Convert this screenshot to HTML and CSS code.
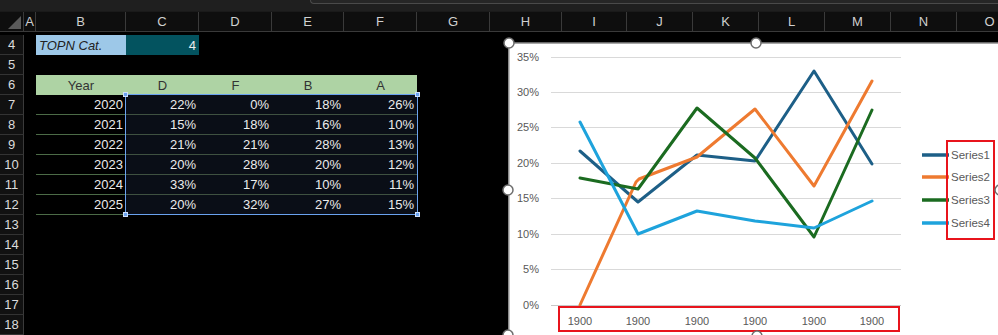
FILE: index.html
```html
<!DOCTYPE html>
<html lang="en">

<head>
    <meta charset="UTF-8">
    <meta name="viewport" content="width=device-width, initial-scale=1.0">
    <title>TOPN Chart</title>
    <link rel="stylesheet" href="styles.css">
</head>

<body>
    <div class="topbar">
        <div class="formula"></div>
    </div>

    <div class="sheet">
        <div class="row heads">
            <div class="corner"></div>
            <div>A</div><div>B</div><div>C</div><div>D</div><div>E</div><div>F</div><div>G</div>
            <div>H</div><div>I</div><div>J</div><div>K</div><div>L</div><div>M</div><div>N</div><div>O</div>
        </div>
        <div class="gap"></div>

        <div class="row">
            <div class="num">4</div><div></div>
            <div class="cell topn">TOPN Cat.</div>
            <div class="cell count">4</div>
        </div>
        <div class="row">
            <div class="num">5</div>
        </div>
        <div class="row">
            <div class="num">6</div><div></div>
            <div class="cell head">Year</div>
            <div class="cell head">D</div>
            <div class="cell head">F</div>
            <div class="cell head">B</div>
            <div class="cell head">A</div>
        </div>
        <div class="row">
            <div class="num">7</div><div></div>
            <div class="cell year">2020</div>
            <div class="cell val">22%</div><div class="cell val">0%</div><div class="cell val">18%</div><div class="cell val">26%</div>
        </div>
        <div class="row">
            <div class="num">8</div><div></div>
            <div class="cell year">2021</div>
            <div class="cell val">15%</div><div class="cell val">18%</div><div class="cell val">16%</div><div class="cell val">10%</div>
        </div>
        <div class="row">
            <div class="num">9</div><div></div>
            <div class="cell year">2022</div>
            <div class="cell val">21%</div><div class="cell val">21%</div><div class="cell val">28%</div><div class="cell val">13%</div>
        </div>
        <div class="row">
            <div class="num">10</div><div></div>
            <div class="cell year">2023</div>
            <div class="cell val">20%</div><div class="cell val">28%</div><div class="cell val">20%</div><div class="cell val">12%</div>
        </div>
        <div class="row">
            <div class="num">11</div><div></div>
            <div class="cell year">2024</div>
            <div class="cell val">33%</div><div class="cell val">17%</div><div class="cell val">10%</div><div class="cell val">11%</div>
        </div>
        <div class="row">
            <div class="num">12</div><div></div>
            <div class="cell year">2025</div>
            <div class="cell val">20%</div><div class="cell val">32%</div><div class="cell val">27%</div><div class="cell val">15%</div>
        </div>
        <div class="row"><div class="num">13</div></div>
        <div class="row"><div class="num">14</div></div>
        <div class="row"><div class="num">15</div></div>
        <div class="row"><div class="num">16</div></div>
        <div class="row"><div class="num">17</div></div>
        <div class="row"><div class="num">18</div></div>

        <!-- selection C7:F12 -->
        <div class="selection">
            <span class="knob tl"></span><span class="knob tr"></span>
            <span class="knob bl"></span><span class="knob br"></span>
        </div>
    </div>

    <!-- floating chart -->
    <svg class="chart" width="492" height="300" viewBox="0 0 492 300">
        <rect x="0.75" y="1" width="500" height="320" fill="#fff" stroke="#8a8a8a" stroke-width="1.5" />

        <g stroke="#d9d9d9" stroke-width="1">
            <line x1="43" y1="15.5" x2="393" y2="15.5" />
            <line x1="43" y1="50.5" x2="393" y2="50.5" />
            <line x1="43" y1="85.5" x2="393" y2="85.5" />
            <line x1="43" y1="121.5" x2="393" y2="121.5" />
            <line x1="43" y1="156.5" x2="393" y2="156.5" />
            <line x1="43" y1="192.5" x2="393" y2="192.5" />
            <line x1="43" y1="227.5" x2="393" y2="227.5" />
            <line x1="43" y1="263.5" x2="393" y2="263.5" stroke="#c8c8c8" />
        </g>

        <g class="axis" text-anchor="end">
            <text x="31" y="19">35%</text>
            <text x="31" y="54">30%</text>
            <text x="31" y="89">25%</text>
            <text x="31" y="125">20%</text>
            <text x="31" y="160">15%</text>
            <text x="31" y="196">10%</text>
            <text x="31" y="231">5%</text>
            <text x="31" y="267">0%</text>
        </g>

        <g class="axis" text-anchor="middle">
            <text x="72" y="283">1900</text>
            <text x="130" y="283">1900</text>
            <text x="189" y="283">1900</text>
            <text x="247" y="283">1900</text>
            <text x="306" y="283">1900</text>
            <text x="364" y="283">1900</text>
        </g>

        <g fill="none" stroke-width="3" stroke-linejoin="round" stroke-linecap="round">
            <polyline stroke="#1d5f87" points="72,109 130,160 189,113 247,119 306,29 364,122" />
            <polyline stroke="#ee7a30" points="72,263 128,140 131,137 189,115 247,67 306,144 364,39" />
            <polyline stroke="#1b6b20" points="72,136 130,147 189,66 247,116 306,195 364,68" />
            <polyline stroke="#1ea3dc" points="72,80 130,192 189,169 247,179 306,186 364,159" />
        </g>

        <g stroke-width="3.5">
            <line x1="414" y1="113" x2="441" y2="113" stroke="#1d5f87" />
            <line x1="414" y1="135" x2="441" y2="135" stroke="#ee7a30" />
            <line x1="414" y1="158" x2="441" y2="158" stroke="#1b6b20" />
            <line x1="414" y1="181" x2="441" y2="181" stroke="#1ea3dc" />
        </g>
        <g class="legend">
            <text x="443" y="117">Series1</text>
            <text x="443" y="139">Series2</text>
            <text x="443" y="162">Series3</text>
            <text x="443" y="185">Series4</text>
        </g>

        <g fill="none" stroke="#e8141c" stroke-width="2">
            <rect x="51" y="265" width="340" height="24" />
            <rect x="439" y="99" width="47" height="98" />
        </g>

        <g fill="#fff" stroke="#6e6e6e" stroke-width="1.5">
            <circle cx="1" cy="1" r="5" />
            <circle cx="248" cy="1" r="5" />
            <circle cx="0" cy="148" r="5" />
            <circle cx="0" cy="293" r="5" />
            <circle cx="249" cy="294" r="5" />
            <circle cx="492" cy="148" r="5" />
        </g>
    </svg>
</body>

</html>
```

FILE: styles.css
```css
* {
    box-sizing: border-box;
}

body {
    margin: 0;
    width: 998px;
    height: 335px;
    overflow: hidden;
    background: #000;
    font-family: "Liberation Sans", Arial, sans-serif;
    font-size: 13px;
    position: relative;
}

.topbar {
    height: 11px;
    background: #1f1f1f;
    padding-left: 310px;
}

.formula {
    height: 4px;
    background: #262626;
    border-left: 1px solid #4a4a4a;
    border-bottom: 1px solid #4a4a4a;
    border-bottom-left-radius: 6px;
}

.sheet {
    position: relative;
}

.row {
    display: grid;
    grid-template-columns: 24px 12px 90px 73px 73px 72px 73px 73px 72px 65px 66px 66px 66px 66px 66px 66px;
    height: 20px;
}

.heads {
    height: 21px;
    background: #0e0e0e;
    border-top: 1px solid #1a1a1a;
    border-bottom: 1px solid #3a3a3a;
    color: #d0d0d0;
}

.heads div {
    display: flex;
    align-items: center;
    justify-content: center;
    border-right: 1px solid #3a3a3a;
}

.corner {
    position: relative;
}

.corner::after {
    content: '';
    position: absolute;
    right: 2px;
    bottom: 2px;
    border-left: 13px solid transparent;
    border-bottom: 13px solid #5a5a5a;
}

.gap {
    height: 3px;
}

.num {
    display: flex;
    align-items: center;
    justify-content: center;
    background: #111;
    color: #dcdcdc;
    border-right: 1px solid #3a3a3a;
    border-bottom: 1px solid #333;
}

.cell {
    display: flex;
    align-items: center;
    padding: 0 3px;
    color: #ececec;
}

.topn {
    background: #9dc8e8;
    color: #222;
    font-style: italic;
}

.count {
    background: #03535f;
    justify-content: flex-end;
}

.head {
    background: #aed3a4;
    color: #333;
    justify-content: center;
}

.year {
    justify-content: flex-end;
    border-bottom: 1px solid #4c6b47;
}

.val {
    justify-content: flex-end;
    background: #0a0e17;
    border-bottom: 1px solid #3f5141;
}

.selection {
    position: absolute;
    left: 125px;
    top: 83px;
    width: 293px;
    height: 121px;
    border: 1px solid #6aa2ef;
}

.knob {
    position: absolute;
    width: 5px;
    height: 5px;
    background: #6aa2ef;
    border: 1px solid #cfe0fa;
}

.tl { left: -3px; top: -3px; }
.tr { right: -3px; top: -3px; }
.bl { left: -3px; bottom: -3px; }
.br { right: -3px; bottom: -3px; }

.chart {
    position: absolute;
    left: 508px;
    top: 42px;
    overflow: visible;
}

.axis text {
    font-family: "Liberation Sans", Arial, sans-serif;
    font-size: 11px;
    fill: #595959;
}

.legend text {
    font-family: "Liberation Sans", Arial, sans-serif;
    font-size: 11.5px;
    fill: #595959;
}
```
